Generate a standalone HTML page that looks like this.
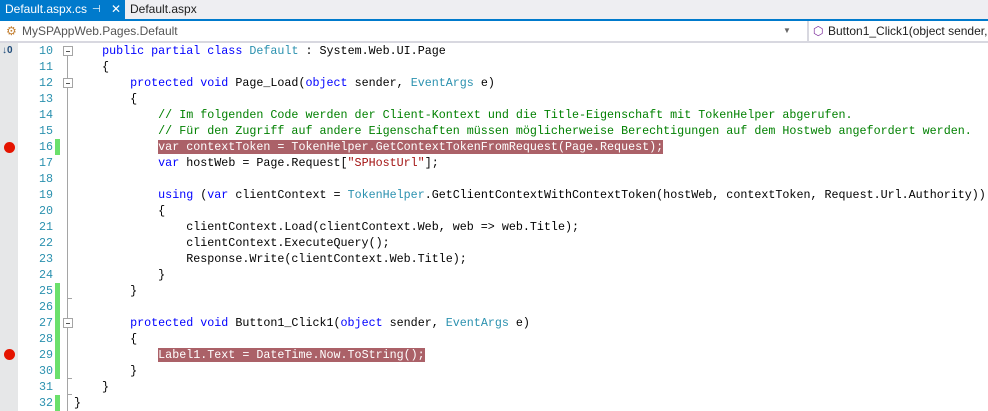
<!DOCTYPE html><html><head><style>
body{margin:0;width:988px;height:411px;overflow:hidden;background:#fff;position:relative;font-family:"Liberation Sans",sans-serif}
.tabs{position:absolute;left:0;top:0;width:988px;height:19px;background:#eeeef2}
.tab1{position:absolute;left:0;top:0;width:125px;height:19px;background:#007acc;color:#fff;font-size:12px;line-height:19px}
.tab2{position:absolute;left:130px;top:0;font-size:12px;line-height:19px;color:#1e1e1e}
.blue{position:absolute;left:0;top:19px;width:988px;height:2px;background:#007acc}
.nav{position:absolute;left:0;top:21px;width:988px;height:20px;background:#fff;border-bottom:2px solid #d8d8e0;font-size:12px;color:#555;line-height:20px;white-space:nowrap;overflow:hidden}
.gut{position:absolute;left:0;top:43px;width:18px;height:368px;background:#e6e7e8}
.ln{position:absolute;left:20px;width:33px;text-align:right;color:#2b91af;font:11.7px/16px "Liberation Mono",monospace}
.code{position:absolute;left:74px;white-space:pre;font:11.7px/16px "Liberation Mono",monospace;color:#000}
.k{color:#0000ff}.t{color:#2b91af}.c{color:#008000}.s{color:#a31515}
.hl{background:#ab6168;color:#fff}
.gb{position:absolute;left:55px;width:5px;background:#6be06b}
.bp{position:absolute;left:4px;width:11px;height:11px;border-radius:50%;background:#e51400}
.fl{position:absolute;left:67px;width:1px;background:#a5a5a5}
.fb{position:absolute;left:63px;width:8px;height:8px;border:1px solid #a5a5a5;background:#fff}
.fb:after{content:"";position:absolute;left:2px;top:4px;width:4px;height:1px;background:#555}
.fe{position:absolute;left:67px;width:5px;height:1px;background:#a5a5a5}
</style></head><body>
<div class="tabs"></div>
<div class="tab1"><span style="margin-left:5px">Default.aspx.cs</span><span style="position:absolute;left:92px;font-size:10px">⊣</span><span style="position:absolute;left:111px">✕</span></div>
<div class="tab2">Default.aspx</div>
<div class="blue"></div>
<div class="nav"><span style="position:absolute;left:6px;color:#c27d2e">⚙</span><span style="position:absolute;left:22px">MySPAppWeb.Pages.Default</span>
<span style="position:absolute;left:783px;font-size:8px;color:#666">▼</span>
<div style="position:absolute;left:807px;top:0;width:2px;height:20px;background:#d8d8e0"></div>
<span style="position:absolute;left:813px;color:#7a2a9a">⬡</span><span style="position:absolute;left:828px;color:#1e1e1e">Button1_Click1(object sender, EventArgs e)</span></div>
<div class="gut"></div>
<div style="position:absolute;left:2px;top:45px;font:bold 10px 'Liberation Sans';color:#1e4b7a">↓0</div>
<div class="bp" style="top:142px"></div><div class="bp" style="top:349px"></div>
<div class="gb" style="top:139px;height:16px"></div>
<div class="gb" style="top:283px;height:96px"></div>
<div class="gb" style="top:395px;height:16px"></div>
<div class="fl" style="top:55px;height:356px"></div>
<div class="fb" style="top:46px"></div><div class="fb" style="top:78px"></div><div class="fb" style="top:318px"></div>
<div class="fe" style="top:298px"></div><div class="fe" style="top:378px"></div><div class="fe" style="top:394px"></div>
<div class="ln" style="top:43px">10<br>11<br>12<br>13<br>14<br>15<br>16<br>17<br>18<br>19<br>20<br>21<br>22<br>23<br>24<br>25<br>26<br>27<br>28<br>29<br>30<br>31<br>32</div>
<div class="code" style="top:43px">    <span class="k">public partial class</span> <span class="t">Default</span> : System.Web.UI.Page
    {
        <span class="k">protected void</span> Page_Load(<span class="k">object</span> sender, <span class="t">EventArgs</span> e)
        {
            <span class="c">// Im folgenden Code werden der Client-Kontext und die Title-Eigenschaft mit TokenHelper abgerufen.</span>
            <span class="c">// Für den Zugriff auf andere Eigenschaften müssen möglicherweise Berechtigungen auf dem Hostweb angefordert werden.</span>
            <span class="hl">var contextToken = TokenHelper.GetContextTokenFromRequest(Page.Request);</span>
            <span class="k">var</span> hostWeb = Page.Request[<span class="s">"SPHostUrl"</span>];

            <span class="k">using</span> (<span class="k">var</span> clientContext = <span class="t">TokenHelper</span>.GetClientContextWithContextToken(hostWeb, contextToken, Request.Url.Authority))
            {
                clientContext.Load(clientContext.Web, web =&gt; web.Title);
                clientContext.ExecuteQuery();
                Response.Write(clientContext.Web.Title);
            }
        }

        <span class="k">protected void</span> Button1_Click1(<span class="k">object</span> sender, <span class="t">EventArgs</span> e)
        {
            <span class="hl">Label1.Text = DateTime.Now.ToString();</span>
        }
    }
}</div>
</body></html>
